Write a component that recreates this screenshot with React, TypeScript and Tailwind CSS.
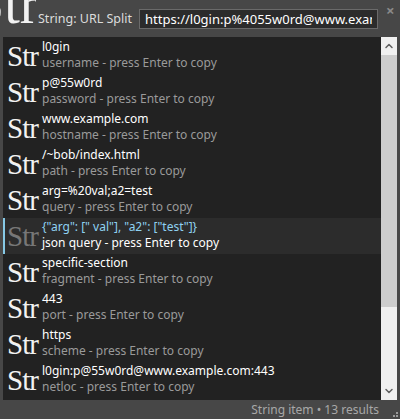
import { ChevronUp, ChevronDown } from 'lucide-react';

const items = [
  { title: 'l0gin', sub: 'username' },
  { title: 'p@55w0rd', sub: 'password' },
  { title: 'www.example.com', sub: 'hostname' },
  { title: '/~bob/index.html', sub: 'path' },
  { title: 'arg=%20val;a2=test', sub: 'query' },
  { title: '{"arg": [" val"], "a2": ["test"]}', sub: 'json query', selected: true },
  { title: 'specific-section', sub: 'fragment' },
  { title: '443', sub: 'port' },
  { title: 'https', sub: 'scheme' },
  { title: 'l0gin:p@55w0rd@www.example.com:443', sub: 'netloc' },
];

export default function App() {
  return (
    <div className="w-[400px] h-[419px] bg-[#474747] flex flex-col overflow-hidden font-['Noto_Sans',sans-serif]">
      {/* Header */}
      <div className="h-[37px] flex items-start shrink-0">
        <div className="w-[36px] h-[24px] overflow-hidden shrink-0">
          <div className="-mt-[24px] -ml-[27px] text-[56px] leading-none text-[#f2f2f2] font-['Liberation_Serif',serif] whitespace-nowrap">
            Str
          </div>
        </div>
        <div className="mt-[10px] ml-[2px] text-[12.5px] leading-[18px] text-[#dcdcdc] whitespace-nowrap">String: URL Split</div>
        <input
          readOnly
          value="https://l0gin:p%4055w0rd@www.example.com:443/~bob/index.html"
          className="mt-[9px] ml-[7px] w-[239px] h-[20px] border border-[#6a6a6a] bg-[#2b2b2b] px-[5px] text-[13px] text-white outline-none"
        />
        <div className="ml-[8px] mt-[3px] text-[15px] leading-[15px] text-[#8a8a8a] font-bold">×</div>
      </div>

      {/* List */}
      <div className="mx-[3px] h-[363px] bg-[#222222] flex shrink-0">
        <div className="flex-1 flex flex-col pt-[1px] overflow-hidden">
          {items.map((it) => (
            <div
              key={it.sub}
              className={`h-[36px] shrink-0 flex items-start border-l-2 ${
                it.selected ? 'border-[#86c9e6] bg-[#2c2c2c]' : 'border-transparent'
              }`}
            >
              <div
                className={`w-[37px] pl-[2px] pt-[3px] text-[29px] leading-[30px] tracking-[-1px] font-['Liberation_Serif',serif] ${
                  it.selected ? 'text-[#777777]' : 'text-[#f2f2f2]'
                }`}
              >
                Str
              </div>
              <div className="flex flex-col pt-[1px] min-w-0">
                <div className={`text-[12px] leading-[16px] whitespace-nowrap ${it.selected ? 'text-[#8fd2f2]' : 'text-white'}`}>
                  {it.title}
                </div>
                <div className={`text-[12px] leading-[16px] whitespace-nowrap ${it.selected ? 'text-white' : 'text-[#9a9a9a]'}`}>
                  {it.sub} - press Enter to copy
                </div>
              </div>
            </div>
          ))}
        </div>
        {/* Scrollbar */}
        <div className="w-[16px] bg-[#f0f0f0] flex flex-col shrink-0">
          <div className="h-[18px] flex items-center justify-center">
            <ChevronUp size={12} strokeWidth={3} className="text-[#606060]" />
          </div>
          <div className="h-[252px] bg-[#cdcdcd]" />
          <div className="flex-1" />
          <div className="h-[18px] flex items-center justify-center">
            <ChevronDown size={12} strokeWidth={3} className="text-[#606060]" />
          </div>
        </div>
      </div>

      {/* Status bar */}
      <div className="flex-1 flex items-center justify-end relative pr-[21px]">
        <span className="text-[12px] text-[#a8a8a8] leading-none">String item • 13 results</span>
        <div className="absolute right-[2px] bottom-[2px] grid grid-cols-3 gap-[1px]">
          <span className="w-[2px] h-[2px]" />
          <span className="w-[2px] h-[2px]" />
          <span className="w-[2px] h-[2px] bg-[#9a9a9a]" />
          <span className="w-[2px] h-[2px]" />
          <span className="w-[2px] h-[2px] bg-[#9a9a9a]" />
          <span className="w-[2px] h-[2px] bg-[#9a9a9a]" />
        </div>
      </div>
    </div>
  );
}
